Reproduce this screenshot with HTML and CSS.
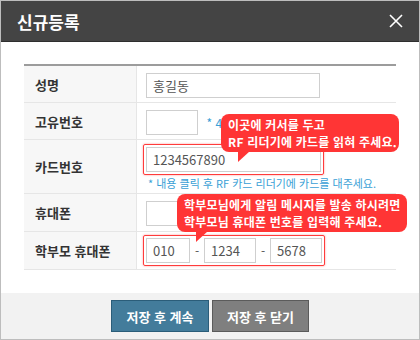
FILE: index.html
```html
<!DOCTYPE html>
<html lang="ko">
<head>
    <meta charset="UTF-8">
    <meta name="viewport" content="width=device-width, initial-scale=1.0">
    <title>신규등록</title>
    <link rel="stylesheet" href="styles.css">
</head>
<body>

    <div class="modal">
        <div class="modal-head">
            <h2 class="modal-title">신규등록</h2>
            <button class="close-btn" aria-label="닫기">
                <svg width="14" height="14" viewBox="0 0 14 14">
                    <path d="M1 1 L13 13 M13 1 L1 13" stroke="#fff" stroke-width="1.6" fill="none"/>
                </svg>
            </button>
        </div>

        <div class="modal-body">
            <table class="form-table">
                <tr class="row-1">
                    <th>성명</th>
                    <td><input type="text" class="input input-name" value="홍길동"></td>
                </tr>
                <tr class="row-2">
                    <th>고유번호</th>
                    <td>
                        <input type="text" class="input input-short">
                        <span class="note">* 4</span>
                    </td>
                </tr>
                <tr class="row-3">
                    <th>카드번호</th>
                    <td>
                        <div class="alert-box">
                            <input type="text" class="input input-card" value="1234567890">
                            <div class="tooltip tip-card">
                                이곳에 커서를 두고<br>
                                RF 리더기에 카드를 읽혀 주세요.
                            </div>
                        </div>
                        <p class="hint">* 내용 클릭 후 RF 카드 리더기에 카드를 대주세요.</p>
                    </td>
                </tr>
                <tr class="row-4">
                    <th>휴대폰</th>
                    <td><input type="text" class="input input-short"></td>
                </tr>
                <tr class="row-5">
                    <th>학부모 휴대폰</th>
                    <td>
                        <div class="alert-box">
                            <input type="text" class="input input-p1" value="010">
                            <span class="dash">-</span>
                            <input type="text" class="input input-p2" value="1234">
                            <span class="dash">-</span>
                            <input type="text" class="input input-p2" value="5678">
                            <div class="tooltip tip-parent">
                                학부모님에게 알림 메시지를 발송 하시려면<br>
                                학부모님 휴대폰 번호를 입력해 주세요.
                            </div>
                        </div>
                    </td>
                </tr>
            </table>
        </div>

        <div class="modal-foot">
            <button class="btn btn-save">저장 후 계속</button>
            <button class="btn btn-close">저장 후 닫기</button>
        </div>
    </div>

</body>
</html>
```

FILE: styles.css
```css
*{
    margin: 0;
    padding: 0;
    box-sizing: border-box;
}

body{
    font-family: "Noto Sans CJK KR", "Noto Sans", sans-serif;
    background: #fff;
}

.modal{
    width: 420px;
    height: 340px;
    border: 1px solid #bdbdbd;
    display: flex;
    flex-direction: column;
    background: #fff;
}

.modal-head{
    height: 41px;
    background-color: #444;
    border-bottom: 1px solid #2e2e2e;
    display: flex;
    align-items: center;
    justify-content: space-between;
    padding: 0 16px 0 16px;
}

.modal-title{
    color: #fff;
    font-size: 17px;
    font-weight: 700;
    line-height: 20px;
    padding-top: 2px;
}

.close-btn{
    background: none;
    border: none;
    width: 14px;
    height: 14px;
    display: block;
    cursor: pointer;
}

.close-btn svg{
    display: block;
}

.modal-body{
    padding: 22px 23px 0 23px;
    flex: 1;
}

.form-table{
    width: 100%;
    border-collapse: separate;
    border-spacing: 0;
    border-top: 2px solid #9c9c9c;
}

.form-table th,
.form-table td{
    border-bottom: 1px solid #e6e6e6;
    vertical-align: middle;
}

.form-table th{
    width: 113px;
    background-color: #f7f7f7;
    border-right: 1px solid #e6e6e6;
    text-align: left;
    padding-left: 11px;
    font-size: 13px;
    font-weight: 700;
    color: #333;
}

.form-table td{
    padding-left: 9px;
}

.row-1 th, .row-1 td{ height: 37px; }
.row-2 th, .row-2 td{ height: 37px; }
.row-3 th, .row-3 td{ height: 54px; }
.row-4 th, .row-4 td{ height: 38px; }
.row-5 th, .row-5 td{ height: 38px; }

.row-3 td{
    padding-left: 6px;
}

.row-5 td{
    padding-left: 6px;
}

.input{
    height: 25px;
    border: 1px solid #cfcfcf;
    background: #fff;
    font-family: inherit;
    font-size: 13px;
    color: #555;
    padding: 0 6px;
    vertical-align: middle;
    outline: none;
}

.input-name{ width: 174px; }
.input-short{ width: 52px; }
.input-card{ width: 175px; }
.input-p1{ width: 44px; }
.input-p2{ width: 52px; }

.note{
    color: #3a9fd6;
    font-size: 12px;
    margin-left: 4px;
    vertical-align: middle;
}

.alert-box{
    position: relative;
    display: inline-flex;
    align-items: center;
    border: 1px solid #ff3b3b;
    box-shadow: 0 0 2px rgba(255, 60, 60, 0.6);
    border-radius: 2px;
    padding: 2px;
}

.dash{
    width: 14px;
    text-align: center;
    font-size: 12px;
    color: #555;
}

.hint{
    color: #3a9fd6;
    font-size: 11px;
    line-height: 14px;
    margin-top: 1px;
    padding-left: 5px;
}

.tooltip{
    position: absolute;
    background-color: #ff3535;
    color: #fff;
    border-radius: 8px;
    font-size: 12px;
    font-weight: 700;
    letter-spacing: 0.2px;
    line-height: 17px;
    padding: 2px 7px;
    white-space: nowrap;
    height: 38px;
}

.tooltip::after{
    content: "";
    position: absolute;
    top: 37px;
    width: 0;
    height: 0;
    border-top: 11px solid #ff3535;
    border-right: 12px solid transparent;
}

.tip-card{
    left: 77px;
    top: -31px;
    width: 178px;
}

.tip-card::after{
    left: 17px;
}

.tip-parent{
    left: 33px;
    top: -42px;
    width: 230px;
}

.tip-parent::after{
    left: 19px;
}

.modal-foot{
    height: 46px;
    background-color: #f2f2f2;
    display: flex;
    justify-content: center;
    align-items: flex-start;
    gap: 3px;
    padding-top: 7px;
}

.btn{
    height: 32px;
    font-family: inherit;
    font-size: 13px;
    font-weight: 700;
    color: #fff;
    cursor: pointer;
}

.btn-save{
    width: 98px;
    background-color: #437c9b;
    border: 1px solid #2b5d79;
}

.btn-close{
    width: 97px;
    background-color: #7f7f7f;
    border: 1px solid #5b5b5b;
}
```
